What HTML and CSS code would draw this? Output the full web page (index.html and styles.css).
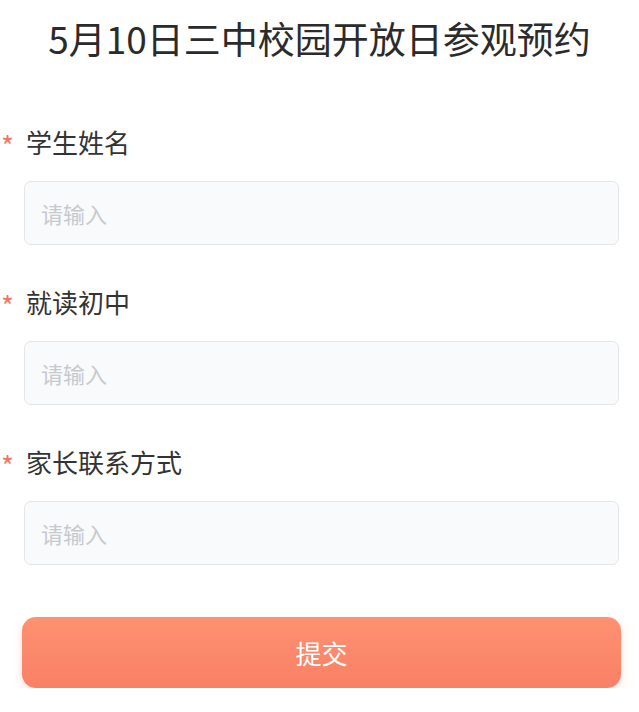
FILE: index.html
```html
<!DOCTYPE html>
<html lang="zh-CN">
<head>
  <meta charset="UTF-8">
  <meta name="viewport" content="width=device-width, initial-scale=1.0">
  <title>校园开放日参观预约</title>
  <link rel="stylesheet" href="styles.css">
</head>
<body>
  <h1 class="title">5月10日三中校园开放日参观预约</h1>

  <form class="form">
    <div class="form-item">
      <label class="label" for="name"><span class="star">*</span>学生姓名</label>
      <input class="input" id="name" type="text" placeholder="请输入">
    </div>
    <div class="form-item">
      <label class="label" for="school"><span class="star">*</span>就读初中</label>
      <input class="input" id="school" type="text" placeholder="请输入">
    </div>
    <div class="form-item">
      <label class="label" for="phone"><span class="star">*</span>家长联系方式</label>
      <input class="input" id="phone" type="text" placeholder="请输入">
    </div>
    <button class="submit" type="button">提交</button>
  </form>
</body>
</html>
```

FILE: styles.css
```css
body, html {
  margin: 0;
  padding: 0;
  background: #fff;
  font-family: "Noto Sans CJK SC", "Noto Sans", sans-serif;
  color: #333;
}
.title {
  margin: 0;
  height: 76px;
  line-height: 76px;
  font-size: 37px;
  font-weight: 400;
  text-align: center;
  color: #2b2b2b;
}
.form {
  padding: 45px 20px 0 24px;
}
.form-item {
  margin-bottom: 36px;
}
.label {
  display: flex;
  align-items: center;
  height: 40px;
  margin-left: -24px;
  margin-bottom: 20px;
  font-size: 26px;
  color: #333;
}
.star {
  width: 26px;
  padding-left: 1px;
  box-sizing: border-box;
  font-size: 28px;
  color: #f0775c;
  line-height: 1;
  padding-top: 8px;
}
.input {
  display: block;
  width: 100%;
  height: 64px;
  box-sizing: border-box;
  padding: 0 16px;
  border: 1px solid #e3e6ea;
  border-radius: 7px;
  background: #f8fafc;
  font-family: inherit;
  font-size: 22px;
  color: #333;
  outline: none;
}
.input::placeholder {
  color: #c6c9ce;
}
.submit {
  display: block;
  width: calc(100% + 4px);
  height: 71px;
  margin: 52px -2px 0 -2px;
  border: none;
  border-radius: 14px;
  background: linear-gradient(to bottom, #fe9170, #f98066);
  box-shadow: 0 4px 10px rgba(249, 128, 102, 0.25);
  font-family: inherit;
  font-size: 26px;
  color: #fff;
}
```
